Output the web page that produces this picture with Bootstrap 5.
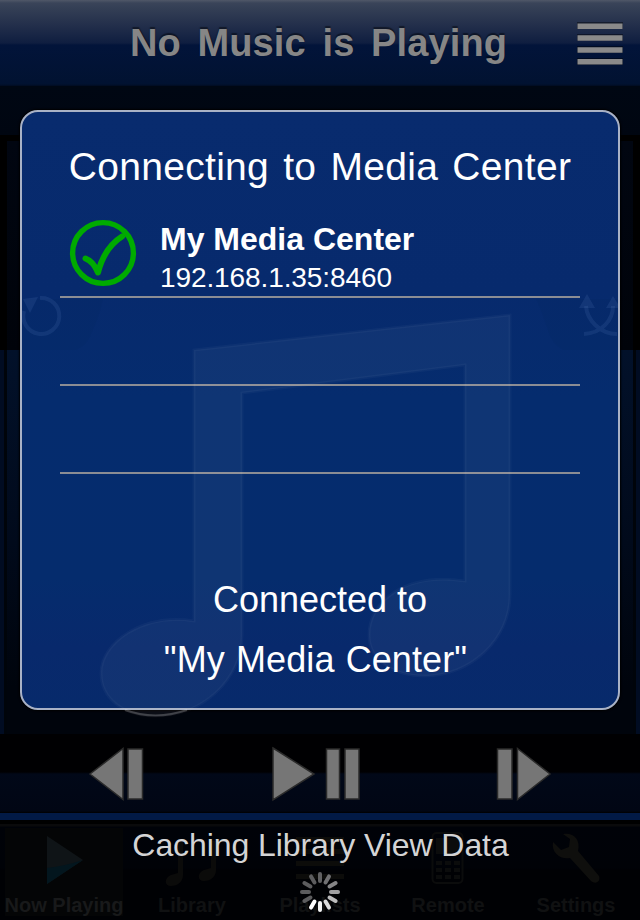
<!DOCTYPE html>
<html lang="en">
<head>
<meta charset="utf-8">
<meta name="viewport" content="width=device-width, initial-scale=1">
<title>Media Remote</title>
<link href="https://cdn.jsdelivr.net/npm/bootstrap@5.3.0/dist/css/bootstrap.min.css" rel="stylesheet">
<style>
body{background:#000;font-family:"Liberation Sans",Arial,sans-serif;color:#fff}
.screen{width:640px;height:920px}
.topbar{height:86px;background:linear-gradient(#505868 0,#3a4459 3px,#343f55 8px,#232f4b 25px,#0f1e40 43px,#02143a 45px,#011231 84px,#010b20 86px);}
.topbar h1{font-size:38px;line-height:46px;font-weight:700;word-spacing:6px;letter-spacing:.12px;color:#868686;text-shadow:0 -2px 1px rgba(0,0,0,.45);padding-right:3px}
.menu-lines{width:46px;height:44px;right:17px;top:22px}
.stage{height:648px;padding:24px 20px 0;
 background:
 linear-gradient(90deg,#000 0 7px,transparent 7px 633px,#000 633px) 0 49px/100% 215px no-repeat,
 linear-gradient(#010611,#00030a) 0 55px/100% 209px no-repeat,
 linear-gradient(90deg,#010c22 0 4px,#00040a 4px 7px,transparent 7px 633px,#00040a 633px 636px,#010c22 636px) 0 264px/100% 384px no-repeat,
 linear-gradient(#02112a,#010a1b 50%,#00040c 88%) 0 264px/100% 384px no-repeat,
 linear-gradient(#000713,#000611) 0 0/100% 49px no-repeat,#000}
.dialog-panel{width:600px;height:600px;border:2px solid #a9b2c6;border-radius:18px;background:linear-gradient(#082b6e,#072a6d 30%,#052c6e 48%,#052c6d 78%,#08296c 90%,#072a6b);box-shadow:0 0 2px 1px #000}
.dialog-panel h2{font-size:39px;line-height:46px;font-weight:400;letter-spacing:.3px;word-spacing:3px;margin:32px 0 0}
.server-row{height:88px;margin:0 38px;border-bottom:2px solid #8b8d94}
.server-row.first-row{height:108px;padding:29px 0 0 9px}
.server-name{font-size:32px;line-height:36px;font-weight:700;margin:2px 0 0 -1px}
.server-ip{font-size:28px;line-height:32px;letter-spacing:-.1px;margin:5px 0 0 -1px}
.status-text{font-size:36px;line-height:60px;margin-top:96px}
.status-name{letter-spacing:.1px;word-spacing:1px;padding-right:9px}
.under-art{left:0;top:0;pointer-events:none}
.transport{height:79px;background:linear-gradient(#000002 0 38px,#010818 40px,#010614 77px,#000 79px)}
.tabs-area{height:107px;border-top:7px solid #021a46;background:linear-gradient(#000 0 4px,#0a0a0b 4px 6px,#000208 7px,#000207 48px,#000104 50px)}
.tab-item{width:128px;height:88px;margin-top:8px;padding-top:2px;color:#101112;font-size:20px;line-height:22px;font-weight:700}
.tab-item.current{color:#18191a;background:#040506;background-clip:content-box;padding:0 5px}
.tab-item.current svg{margin-top:2px}
.tab-item .label{white-space:nowrap}
.tab-item.current .label{margin:0 -5px}
.caching{top:827px;font-size:32px;line-height:36px;letter-spacing:-.08px;padding-left:1px;color:#d4d4d5}
.spin{top:871px;left:299px}
</style>
<script src="https://cdn.jsdelivr.net/npm/bootstrap@5.3.0/dist/js/bootstrap.bundle.min.js"></script>
</head>
<body class="m-0 overflow-hidden">
<div class="screen position-relative d-flex flex-column overflow-hidden">
  <header class="topbar position-relative d-flex align-items-center justify-content-center flex-shrink-0">
    <h1 class="mb-0">No Music is Playing</h1>
    <svg class="menu-lines position-absolute" viewBox="0 0 46 44" aria-hidden="true"><g fill="#000" opacity=".4"><path d="M0 0h46v7H0zM0 12h46v7H0zM0 24h46v7H0zM0 36h46v7H0z"/></g><g fill="#8a8a8a"><path d="M.5 1.5h45v5.5H.5zM.5 13.3h45v5.5H.5zM.5 25.2h45v5.5H.5zM.5 37h45v5.5H.5z"/></g></svg>
  </header>

  <main class="stage flex-shrink-0">
    <section class="dialog-panel text-center">
      <h2>Connecting to Media Center</h2>
      <div class="server-row first-row d-flex text-start">
        <svg width="68" height="68" viewBox="0 0 68 68" aria-hidden="true"><circle cx="34" cy="34" r="30.4" fill="none" stroke="#00ab00" stroke-width="5.4"/><path d="M16.500 39.500C22 41.500 26 46.500 29 53.500C33 38 41 25 53 17.500" fill="none" stroke="#00ab00" stroke-width="6" stroke-linecap="round" stroke-linejoin="round"/></svg>
        <div class="ms-4">
          <div class="server-name">My Media Center</div>
          <div class="server-ip">192.168.1.35:8460</div>
        </div>
      </div>
      <div class="server-row"></div>
      <div class="server-row"></div>
      <div class="status-text"><div>Connected to</div><div class="status-name">"My Media Center"</div></div>
    </section>
  </main>

  <div class="transport flex-shrink-0">
    <svg class="d-block" width="640" height="79" viewBox="0 734 640 79" aria-label="Playback controls"><g fill="#767676" stroke="#2b2b2b" stroke-width="1.5"><path d="M90 774L123 748.500V799.500ZM128 749h14.500v50H128ZM273 748L314 774L273 800ZM326.500 749h13v50h-13ZM345 749h14v50h-14ZM497.500 749h14.500v50h-14.500ZM517.500 748.500L550 774L517.500 799.500Z"/></g></svg>
  </div>

  <nav class="tabs-area d-flex flex-shrink-0">
    <div class="tab-item current d-flex flex-column align-items-center justify-content-between">
      <svg width="40" height="60" viewBox="44 830 40 60"><path d="M47 836L83 860L47 884Z" fill="#0f1417"/><path d="M47 868Q65 866 83 860L47 884Z" fill="#03161e"/></svg>
      <div class="label">Now Playing</div>
    </div>
    <div class="tab-item d-flex flex-column align-items-center justify-content-between">
      <svg width="56" height="60" viewBox="164 830 56 60"><path d="M178 841h5v34c0 8-7 11-12 11-7 0-7-8 0-11l7-2ZM211 841h5v29c0 8-7 11-12 11-7 0-7-8 0-11l7-2Z" fill="#0b0b0a"/></svg>
      <div class="label">Library</div>
    </div>
    <div class="tab-item d-flex flex-column align-items-center justify-content-between">
      <svg width="50" height="60" viewBox="0 0 50 60"><path d="M1 7h48v5H1zM1 19h48v5H1zM1 31h48v5H1zM1 44h48v5H1z" fill="#0c0c0a"/></svg>
      <div class="label">Playlists</div>
    </div>
    <div class="tab-item d-flex flex-column align-items-center justify-content-between">
      <svg width="34" height="60" viewBox="0 0 34 60"><rect x="1.500" y="3" width="30" height="50" rx="4" fill="none" stroke="#0b0c0c" stroke-width="2"/><path d="M5 8h23v16H5zM5 31h6v4H5zM14 31h6v4h-6zM23 31h6v4h-6zM5 38h6v4H5zM14 38h6v4h-6zM23 38h6v4h-6zM5 45h6v4H5zM14 45h6v4h-6zM23 45h6v4h-6z" fill="#0b0c0c"/></svg>
      <div class="label">Remote</div>
    </div>
    <div class="tab-item d-flex flex-column align-items-center justify-content-between">
      <svg width="50" height="60" viewBox="552 832 50 60"><path d="M554 844L562 852L570 849L571 841L564 836C574 834 582 841 579 853L600 878C602 883 597 887 592 883L571 860C562 862 552 855 554 844Z" fill="#0f0f0d"/></svg>
      <div class="label">Settings</div>
    </div>
  </nav>

  <svg class="under-art position-absolute" width="640" height="740" viewBox="0 0 640 740" aria-hidden="true">
    <path d="M194 350L510 315V595C510 640 470 676 425 676C393 676 369 660 369 635C369 603 403 572 465 581V365L242 393V636C242 678 204 716 155 716C123 716 101 698 101 673C101 643 142 613 194 621Z" fill="#fff" fill-opacity=".045" stroke="#fff" stroke-opacity=".03" stroke-width="3"/>
    <path d="M125 710Q155 721 187 710" fill="none" stroke="#fff" stroke-opacity=".2" stroke-width="2"/>
    <path d="M22 350H76Q88 346 93 330Q100 315 103 299H22ZM618 350H563Q551 344 547 328Q542 312 536 299H618Z" fill="#000" opacity=".02"/>
    <g fill="none" stroke="#8ab0e8" stroke-opacity=".1" stroke-width="4"><path d="M40 298A18 18 0 1 1 24 311"/><path d="M586 306C587 320 600 334 617 334M584 334C602 333 613 320 613 306"/></g>
    <path d="M23 299L38 297L30 313ZM579 308L587 294L595 308ZM606 308L613 296L618 304V308Z" fill="#8ab0e8" fill-opacity=".1"/>
  </svg>

  <div class="caching position-absolute w-100 text-center">Caching Library View Data</div>
  <svg class="spin position-absolute" width="42" height="42" viewBox="-21 -21 42 42" role="img" aria-label="Loading"><g stroke-width="4" stroke-linecap="round">
    <path d="M0-11V-18" stroke="#606062"/><path d="M0-11V-18" stroke="#707072" transform="rotate(30)"/><path d="M0-11V-18" stroke="#858587" transform="rotate(60)"/><path d="M0-11V-18" stroke="#a0a0a2" transform="rotate(90)"/><path d="M0-11V-18" stroke="#bcbcbd" transform="rotate(120)"/><path d="M0-11V-18" stroke="#dcdcdd" transform="rotate(150)"/><path d="M0-11V-18" stroke="#f4f4f4" transform="rotate(180)"/><path d="M0-11V-18" stroke="#fff" transform="rotate(210)"/><path d="M0-11V-18" stroke="#5c5c5e" transform="rotate(240)"/><path d="M0-11V-18" stroke="#5c5c5e" transform="rotate(270)"/><path d="M0-11V-18" stroke="#5c5c5e" transform="rotate(300)"/><path d="M0-11V-18" stroke="#5c5c5e" transform="rotate(330)"/></g></svg>
</div>
</body>
</html>
